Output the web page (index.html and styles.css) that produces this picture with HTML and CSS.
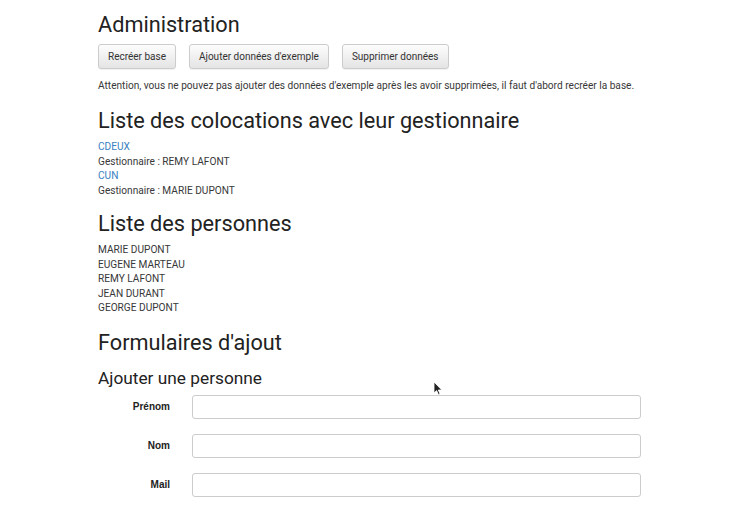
FILE: index.html
```html
<!DOCTYPE html>
<html lang="fr">
<head>
<meta charset="utf-8">
<title>Administration</title>
<link rel="stylesheet" href="styles.css">
</head>
<body>
<main class="page">
  <h2 class="h-admin">Administration</h2>
  <div class="actions">
    <button class="btn">Recréer base</button>
    <button class="btn">Ajouter données d'exemple</button>
    <button class="btn">Supprimer données</button>
  </div>
  <p class="note">Attention, vous ne pouvez pas ajouter des données d'exemple après les avoir supprimées, il faut d'abord recréer la base.</p>

  <h2 class="h-section">Liste des colocations avec leur gestionnaire</h2>
  <ul class="list">
    <li><a class="link" href="#">CDEUX</a></li>
    <li>Gestionnaire : REMY LAFONT</li>
    <li><a class="link" href="#">CUN</a></li>
    <li>Gestionnaire : MARIE DUPONT</li>
  </ul>

  <h2 class="h-section h-after-list">Liste des personnes</h2>
  <ul class="list">
    <li>MARIE DUPONT</li>
    <li>EUGENE MARTEAU</li>
    <li>REMY LAFONT</li>
    <li>JEAN DURANT</li>
    <li>GEORGE DUPONT</li>
  </ul>

  <h2 class="h-section h-forms">Formulaires d'ajout</h2>
  <h3 class="h-sub">Ajouter une personne</h3>
  <form class="form">
    <div class="row">
      <label class="label" for="prenom">Prénom</label>
      <input class="input" id="prenom" type="text">
    </div>
    <div class="row">
      <label class="label" for="nom">Nom</label>
      <input class="input" id="nom" type="text">
    </div>
    <div class="row">
      <label class="label" for="mail">Mail</label>
      <input class="input" id="mail" type="text">
    </div>
  </form>
</main>
<svg class="cursor" width="10" height="15" viewBox="0 0 10 15" aria-hidden="true">
  <path d="M1 1 L1 12 L3.6 9.6 L5.4 13.6 L7 12.9 L5.3 9 L8.8 9 Z" fill="#222" stroke="#fff" stroke-width="0.8"/>
</svg>
</body>
</html>
```
FILE: styles.css
```css
* { box-sizing: border-box; }
html, body { margin: 0; padding: 0; background: #fff; }
body {
  font-family: Roboto, "Liberation Sans", sans-serif;
  font-size: 10.13px;
  color: #383838;
  position: relative;
}
.page {
  padding: 12px 0 0 98px;
  width: 660px;
}
h2, h3, p, ul { margin: 0; }
.h-admin, .h-section {
  font-size: 21.7px;
  font-weight: 400;
  color: #222;
  line-height: 26px;
}
.actions {
  display: flex;
  gap: 13px;
  margin-top: 6px;
}
.btn {
  font-family: Roboto, "Liberation Sans", sans-serif;
  font-size: 10px;
  color: #333;
  height: 25px;
  padding: 0 9px;
  border: 1px solid #ccc;
  border-radius: 3px;
  background: linear-gradient(#fdfdfd, #e4e4e4);
  box-shadow: 0 1px 1px rgba(0,0,0,0.06);
}
.note {
  margin-top: 10px;
  line-height: 14px;
}
.h-section { margin-top: 15px; }
.h-after-list { margin-top: 13px; }
.h-forms { margin-top: 14px; }
.list {
  list-style: none;
  padding: 0;
  margin-top: 6px;
  line-height: 14.5px;
}
.link { color: #3a7fc1; text-decoration: none; }
.h-sub {
  font-size: 17.3px;
  font-weight: 400;
  color: #222;
  line-height: 20px;
  margin-top: 12px;
}
.form { margin-top: 7px; }
.row {
  display: flex;
  align-items: center;
  height: 24px;
  margin-bottom: 15px;
}
.label {
  width: 72px;
  text-align: right;
  font-family: "Liberation Sans", Arial, sans-serif;
  font-weight: bold;
  font-size: 10px;
  color: #222;
}
.input {
  margin-left: 22px;
  width: 449px;
  height: 24px;
  border: 1px solid #ccc;
  border-radius: 3px;
  background: #fff;
}
.cursor {
  position: absolute;
  left: 433px;
  top: 381px;
}
```
